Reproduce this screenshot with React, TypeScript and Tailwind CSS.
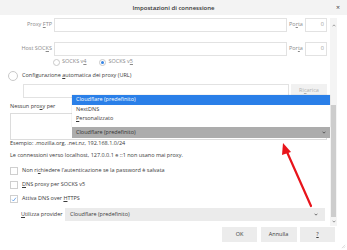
import React from "react";

function Radio({ checked = false, size = 7 }: { checked?: boolean; size?: number }) {
  return (
    <span
      className="flex items-center justify-center rounded-full border border-[#c9c9c9] bg-white shrink-0"
      style={{ width: size, height: size }}
    >
      {checked && <span className="w-[3px] h-[3px] rounded-full bg-[#3584e4]" />}
    </span>
  );
}

function Check({ checked = false }: { checked?: boolean }) {
  return (
    <span className="flex items-center justify-center w-[8px] h-[8px] border border-[#cfcfcf] bg-white shrink-0">
      {checked && (
        <svg viewBox="0 0 8 8" className="w-[7px] h-[7px]">
          <path d="M1.5 4.2 L3.2 6 L6.6 1.6" fill="none" stroke="#3584e4" strokeWidth="0.9" />
        </svg>
      )}
    </span>
  );
}

function Chevron({ color = "#333" }: { color?: string }) {
  return (
    <svg viewBox="0 0 6 4" className="w-[4px] h-[3px]">
      <path d="M0.8 0.8 L3 3 L5.2 0.8" fill="none" stroke={color} strokeWidth="1" />
    </svg>
  );
}

function Field({ className = "", children }: { className?: string; children?: React.ReactNode }) {
  return (
    <div className={`h-[14px] border border-[#e2e2e2] bg-white flex items-center ${className}`}>
      {children}
    </div>
  );
}

export default function App() {
  return (
    <div
      className="relative w-[347px] h-[250px] overflow-hidden bg-white text-[5.5px] leading-none text-[#3a3a3a]"
      style={{ fontFamily: '"Open Sans", "Noto Sans", sans-serif' }}
    >
      {/* Title bar */}
      <div className="relative h-[15px] bg-[#f3f3f3] flex items-center justify-center">
        <span className="text-[6px] font-semibold text-[#333]">Impostazioni di connessione</span>
        <span className="absolute right-[7px] top-[4px] text-[7px] text-[#444]">×</span>
      </div>

      <div className="flex h-[211px]">
        {/* Main column */}
        <div className="flex-1 pl-[8px] pr-[3px] pt-[3px] flex flex-col">
          <div className="flex items-center h-[14px] gap-[2px]">
            <span className="w-[44px] text-right text-[#8a8a8a]">
              Proxy <span className="underline">F</span>TP
            </span>
            <Field className="flex-1" />
            <span className="w-[14px] text-[#8a8a8a]">
              Po<span className="underline">r</span>ta
            </span>
            <Field className="w-[22px] justify-end pr-[2px] text-[#9a9a9a]">0</Field>
          </div>

          <div className="flex items-center h-[14px] gap-[2px] mt-[10px]">
            <span className="w-[44px] text-right text-[#8a8a8a]">
              Host SOC<span className="underline">K</span>S
            </span>
            <Field className="flex-1" />
            <span className="w-[14px] text-[#8a8a8a]">
              Por<span className="underline">t</span>a
            </span>
            <Field className="w-[22px] justify-end pr-[2px] text-[#9a9a9a]">0</Field>
          </div>

          <div className="flex items-center h-[7px] mt-[2.5px] pl-[45px] text-[#8a8a8a]">
            <Radio />
            <span className="ml-[2px]">
              SOCKS v<span className="underline">4</span>
            </span>
            <span className="ml-[13px]">
              <Radio checked />
            </span>
            <span className="ml-[2px]">
              SOCKS v<span className="underline">5</span>
            </span>
          </div>

          <div className="flex items-center h-[9px] mt-[6px]">
            <Radio size={10} />
            <span className="ml-[4px]">
              Configurazione <span className="underline">a</span>utomatica dei proxy (URL)
            </span>
          </div>

          <div className="flex items-center h-[13px] mt-[3.5px] ml-[15px] gap-[2px]">
            <Field className="flex-1 h-[13px]" />
            <div className="w-[36px] h-[13px] bg-[#f1f1f1] flex items-center justify-center text-[#b0b0b0]">
              Ri<span className="underline">c</span>arica
            </div>
          </div>

          <div className="h-[7px] mt-[6.5px] ml-[2px] flex items-center">
            Nessun pro<span className="underline">x</span>y per
          </div>

          <div className="h-[27px] mt-[2.5px] ml-[2px] border border-[#dcdcdc] bg-white" />

          <div className="h-[7px] mt-[0.5px] ml-[2px] flex items-center">
            Esempio: .mozilla.org, .net.nz, 192.168.1.0/24
          </div>

          <div className="h-[7px] mt-[5px] ml-[2px] flex items-center">
            Le connessioni verso localhost, 127.0.0.1 e ::1 non usano mai proxy.
          </div>

          <div className="flex items-center h-[8px] mt-[7.5px] ml-[2px]">
            <Check />
            <span className="ml-[4px]">
              Non ri<span className="underline">c</span>hiedere l’autenticazione se la password è salvata
            </span>
          </div>

          <div className="flex items-center h-[8px] mt-[6px] ml-[2px]">
            <Check />
            <span className="ml-[4px]">
              <span className="underline">D</span>NS proxy per SOCKS v5
            </span>
          </div>

          <div className="flex items-center h-[8px] mt-[6px] ml-[2px]">
            <Check checked />
            <span className="ml-[4px]">
              Attiva DNS over <span className="underline">H</span>TTPS
            </span>
          </div>

          <div className="flex items-center h-[13px] mt-[5px] ml-[13px]">
            <span className="w-[44px]">
              <span className="underline">U</span>tilizza provider
            </span>
            <div className="w-[260px] h-[13px] bg-[#ebebeb] flex items-center justify-between pl-[5px] pr-[7px]">
              <span>Cloudflare (predefinito)</span>
              <Chevron />
            </div>
          </div>
        </div>

        {/* Scrollbar */}
        <div className="w-[7px] mt-[3px] bg-[#f4f4f4] flex flex-col items-center">
          <div className="h-[14px] flex items-center justify-center">
            <svg viewBox="0 0 6 4" className="w-[4px] h-[3px]">
              <path d="M0.8 3.2 L3 1 L5.2 3.2" fill="none" stroke="#666" strokeWidth="0.9" />
            </svg>
          </div>
          <div className="w-[5px] h-[112px] mt-[73px] bg-[#cdcdcd]" />
          <div className="h-[8px] flex items-center justify-center">
            <Chevron color="#666" />
          </div>
        </div>
        <div className="w-[10px]" />
      </div>

      {/* Buttons */}
      <div className="flex justify-end gap-[3.5px] pr-[12px] mt-[1px]">
        <div className="w-[35px] h-[15px] bg-[#ececec] flex items-center justify-center">OK</div>
        <div className="w-[36px] h-[15px] bg-[#ececec] flex items-center justify-center">Annulla</div>
        <div className="w-[35px] h-[15px] bg-[#ececec] flex items-center justify-center">
          <span className="underline">?</span>
        </div>
      </div>

      {/* Resize grip */}
      <svg viewBox="0 0 6 6" className="absolute right-[1px] bottom-[1px] w-[5px] h-[5px]">
        <path d="M5 1 L1 5 M5 3 L3 5" stroke="#c8c8c8" strokeWidth="0.7" />
      </svg>

      {/* Open dropdown popup */}
      <div className="absolute left-[72px] top-[95px] w-[258px] flex flex-col">
        <div className="bg-white shadow-[0_0_1px_rgba(0,0,0,0.25)] pb-[3.5px]">
          <div className="h-[9.5px] bg-[#2a7fe8] text-white flex items-center pl-[4px]">
            Cloudflare (predefinito)
          </div>
          <div className="h-[9.5px] flex items-center pl-[4px]">NextDNS</div>
          <div className="h-[9.5px] flex items-center pl-[4px]">
            <span className="underline">P</span>ersonalizzato
          </div>
        </div>
        <div className="h-[11px] bg-[#acacac] flex items-center justify-between pl-[4px] pr-[4px] text-[#333]">
          <span>Cloudflare (predefinito)</span>
          <Chevron />
        </div>
      </div>

      {/* Red arrow annotation */}
      <svg className="absolute left-0 top-0 w-[347px] h-[250px] pointer-events-none" viewBox="0 0 347 250">
        <line x1="311" y1="206" x2="287" y2="152" stroke="#e8141b" strokeWidth="2.2" strokeLinecap="round" />
        <polygon points="283,143 291,152 282,155" fill="#e8141b" />
      </svg>
    </div>
  );
}
